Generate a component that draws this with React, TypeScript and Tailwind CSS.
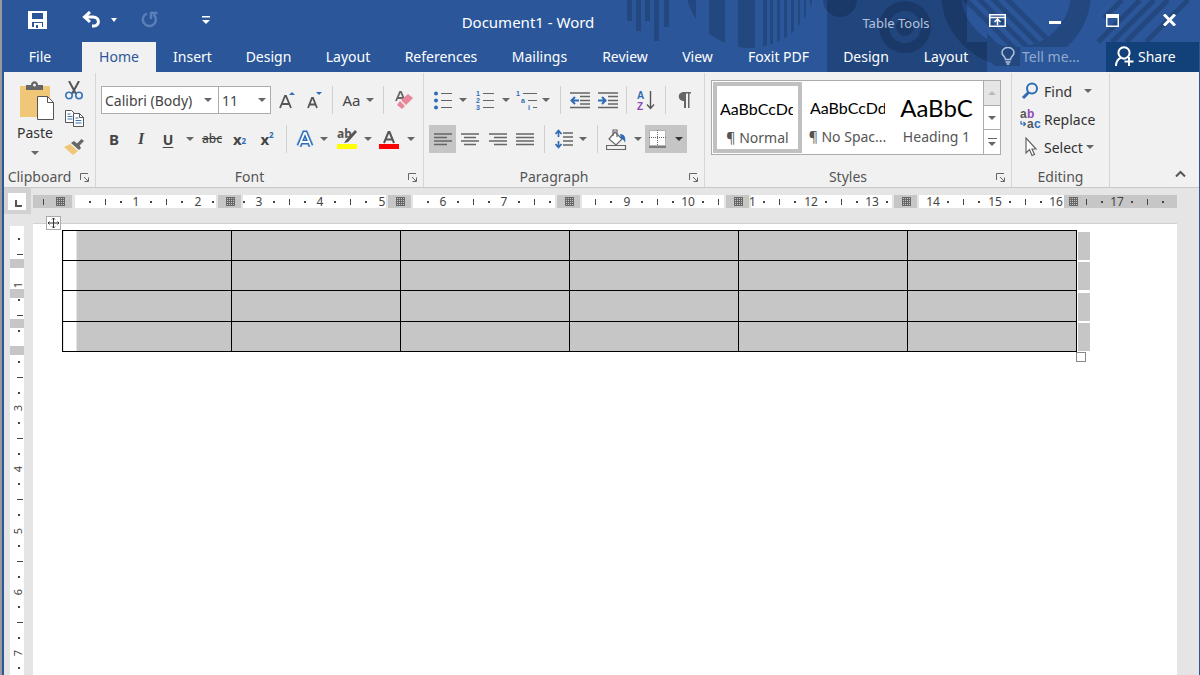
import type { ReactNode } from 'react';
import clsx from 'clsx';

const tabs = [
  { name: 'File', className: 'w-[78px] pr-[6px]' },
  { name: 'Home', className: 'w-[74px] bg-[#f1f1f1] text-[#2b579a]' },
  { name: 'Insert', className: 'w-[73px]' },
  { name: 'Design', className: 'w-[79px]' },
  { name: 'Layout', className: 'w-[80px]' },
  { name: 'References', className: 'w-[106px]' },
  { name: 'Mailings', className: 'w-[91px]' },
  { name: 'Review', className: 'w-[80px]' },
  { name: 'View', className: 'w-[65px]' },
  { name: 'Foxit PDF', className: 'flex-1' },
];

const ROWS = 4;
const COLS = 6;

// Ruler geometry, in pixels
const UNIT = 61.3;
const H_ZERO = 42;
const V_ZERO = -2;
const columnMarks = [185, 355, 524, 693, 861];
const rowMarks = [33, 63, 93, 120];

type ToolProps = {
  label: string;
  className?: string;
  children: ReactNode;
};

const Tool = ({ label, className, children }: ToolProps) => (
  <button
    type="button"
    aria-label={label}
    title={label}
    className={clsx('flex h-7 shrink-0 items-center justify-center text-[#444]', className)}
  >
    {children}
  </button>
);

const Caret = ({ className = 'fill-[#666]' }: { className?: string }) => (
  <svg width="8" height="4" viewBox="0 0 8 4" className={clsx('shrink-0', className)}>
    <path d="M0 0h8L4 4z" />
  </svg>
);

const Drop = ({ label, className }: { label: string; className?: string }) => (
  <Tool label={label} className={className}>
    <Caret />
  </Tool>
);

const Sep = () => <div className="mx-[5px] h-7 w-px shrink-0 bg-[#d0d0d0]" />;

const Launcher = ({ label }: { label: string }) => (
  <button type="button" aria-label={label} className="flex w-5 shrink-0 items-center justify-center pt-[2px]">
    <svg width="10" height="10" viewBox="0 0 10 10" fill="none" stroke="#666">
      <path d="M.5 7V.5H8M4 4l4 4M8.500 4.500v4h-4" />
    </svg>
  </button>
);

type GroupProps = {
  name: string;
  className?: string;
  launcher?: boolean;
  children: ReactNode;
};

const Group = ({ name, className, launcher = true, children }: GroupProps) => (
  <section aria-label={name} className={clsx('flex shrink-0 flex-col border-r border-[#d5d5d5]', className)}>
    <div className="flex-1">{children}</div>
    <div className="flex h-5">
      <span className="flex-1 text-center text-[14px] leading-5 text-[#555]">{name}</span>
      {launcher && <Launcher label={`${name} settings`} />}
    </div>
  </section>
);

// Decorative title bar pattern, with the contextual tab block behind it
const HeaderArt = () => (
  <svg
    width="600"
    height="72"
    viewBox="600 0 600 72"
    className="pointer-events-none absolute top-0 right-[-1px]"
  >
    <defs>
      <clipPath id="disc">
        <circle cx="750" cy="-17" r="65" />
      </clipPath>
      <clipPath id="ringHole">
        <circle cx="1016" cy="-8" r="55" />
      </clipPath>
      <clipPath id="upper">
        <path d="M600 0h420v66h-33V72H600zM1020 0h180v47h-180z" />
      </clipPath>
    </defs>
    <path d="M827 0h140v42h20v30H827z" fill="#21467e" />
    <g fill="#000" opacity="0.17">
      <path d="M627 0h5v21h-5zM636 0h5v31h-5zM645 0h5v21h-5zM654 0h5v41h-5zM664 0h5v27h-5z" />
      <g clipPath="url(#disc)">
        <path d="M686 0h10v50h-10zM709 0h16v50h-16zM738 0h17v50h-17zM763 0h4v50h-4zM770 0h3v50h-3zM777 0h3v50h-3zM784 0h3v50h-3zM791 0h3v50h-3zM798 0h2v50h-2zM804 0h2v50h-2zM810 0h2v50h-2z" />
      </g>
      <circle cx="840" cy="0" r="17" />
      <circle cx="905" cy="27" r="21" fill="none" stroke="#000" strokeWidth="10" />
      <circle cx="905" cy="27" r="9" />
      <g clipPath="url(#upper)">
        <circle cx="1016" cy="-8" r="65" fill="none" stroke="#000" strokeWidth="20" />
      </g>
      <path d="M987 58l8 8h25l-33-33z" />
      <g stroke="#000" strokeWidth="5">
        <path d="M960 -6l70 70M974 -6l60 60M988 -6l60 60M1002 -6l60 60" clipPath="url(#ringHole)" />
        <path d="M1122 0l-18 18M1140 0l-42 42M1154 0l-42 42M1168 0l-42 42M1188 0l-42 42" />
      </g>
    </g>
  </svg>
);

const TitleBar = () => (
  <div className="flex h-[42px] text-white">
    <div className="flex w-[225px] shrink-0 items-center pb-[3px]">
      <button type="button" aria-label="Save" className="ml-6">
        <svg width="19" height="18" viewBox="0 0 19 18" fill="#fff">
          <path d="M0 0h19v18H0zM4 2v6h11V2zM4 11v5h2v-4h8v4h1v-5z" fillRule="evenodd" />
          <path d="M8 14h2v3H8z" fill="#2b579a" />
        </svg>
      </button>
      <button type="button" aria-label="Undo" className="ml-[35px]">
        <svg width="18" height="17" viewBox="0 0 18 17" fill="none" stroke="#fff" strokeWidth="3">
          <path d="M8 1L2.500 6 8 11M3 6h8c7 0 7 9 1 9H10" />
        </svg>
      </button>
      <button type="button" aria-label="Undo history" className="ml-[11px]">
        <svg width="6" height="4" viewBox="0 0 6 4" fill="#fff">
          <path d="M0 0h6L3 4z" />
        </svg>
      </button>
      <button type="button" aria-label="Repeat" className="ml-6">
        <svg width="17" height="17" viewBox="0 0 17 17" fill="none" stroke="#5b80b8" strokeWidth="2.400">
          <path d="M6 2.500A6.500 6.500 0 1 0 12.500 3.500M10 8V2h6.500" />
        </svg>
      </button>
      <button type="button" aria-label="Customize Quick Access Toolbar" className="ml-11">
        <svg width="8" height="8" viewBox="0 0 8 8" fill="#fff">
          <path d="M0 0h8v1.500H0zM0 4h8L4 8z" />
        </svg>
      </button>
    </div>
    <h1 className="flex-1 pt-3 text-center text-[15px] leading-5">Document1 - Word</h1>
    <div className="w-[140px] shrink-0 pt-[13px] pr-[2px] text-center text-[13px] leading-5 text-[#b3c3dc]">
      Table Tools
    </div>
    <div className="flex w-[232px] shrink-0 items-center pb-[2px]">
      <button type="button" aria-label="Ribbon Display Options" className="ml-[22px]">
        <svg width="17" height="13" viewBox="0 0 17 13" fill="none" stroke="#fff" strokeWidth="1.500">
          <path d="M.75.750h15.500v11.500H.75zM1 3.500h15M8.500 11V6M5.500 8l3-3 3 3" />
        </svg>
      </button>
      <button type="button" aria-label="Minimize" className="mt-[4px] ml-[43px]">
        <svg width="12" height="3" viewBox="0 0 12 3" fill="#fff">
          <path d="M0 0h12v3H0z" />
        </svg>
      </button>
      <button type="button" aria-label="Restore" className="ml-[45px]">
        <svg width="13" height="13" viewBox="0 0 13 13" fill="#fff">
          <path d="M0 0h13v13H0zM1.500 4v7.500h10V4z" fillRule="evenodd" />
        </svg>
      </button>
      <button type="button" aria-label="Close" className="ml-[44px]">
        <svg width="13" height="12" viewBox="0 0 13 12" fill="none" stroke="#fff" strokeWidth="3">
          <path d="M1 .5l11 11M12 .5l-11 11" />
        </svg>
      </button>
    </div>
  </div>
);

const TabBar = () => (
  <nav className="flex h-[30px] text-[14px] text-white">
    {tabs.map((tab) => (
      <button key={tab.name} type="button" className={clsx('h-full pb-[2px]', tab.className)}>
        {tab.name}
      </button>
    ))}
    <button type="button" className="w-[78px] shrink-0 pb-[2px]">
      Design
    </button>
    <button type="button" className="w-[82px] shrink-0 pb-[2px]">
      Layout
    </button>
    <label className="flex w-[119px] shrink-0 items-center pb-[2px] pl-[14px]">
      <svg width="14" height="18" viewBox="0 0 14 18" fill="none" stroke="#b3c3dc" strokeWidth="1.500">
        <path d="M4.500 12.500c0-3-3.500-3.500-3.500-7a6 5 0 0 1 12 0c0 3.500-3.500 4-3.500 7zM4.500 15h5M5.500 17h3" />
      </svg>
      <input
        type="text"
        aria-label="Tell me what you want to do"
        placeholder="Tell me..."
        className="ml-[7px] w-20 bg-transparent outline-none placeholder:text-[#93aacd]"
      />
    </label>
    <button type="button" className="flex w-[93px] shrink-0 items-center bg-[#124078] pb-[2px] pl-[9px]">
      <svg width="19" height="21" viewBox="0 0 19 21" fill="none" stroke="#fff" strokeWidth="2">
        <path d="M1 20c0-4 2-7 5-8.500A5.600 5.600 0 1 1 12 11.500M6 11.500c2 1.500 4 1.500 6 0M14 11v9M9.500 15.500h9" />
      </svg>
      <span className="ml-[4px]">Share</span>
    </button>
  </nav>
);

const ClipboardGroup = () => (
  <Group name="Clipboard" className="w-[92px]">
    <div className="flex">
      <button type="button" className="ml-[11px] flex w-10 flex-col items-center self-start text-[14px] text-[#333]">
        <svg width="36" height="40" viewBox="0 0 36 40" className="mt-2 self-end">
          <path d="M1 5h30v31H1z" fill="#f0c677" />
          <path d="M7 9V4h5c0-5 7-5 7 0h5v5z" fill="#666" />
          <circle cx="15.500" cy="4" r="1.500" fill="#f1f1f1" />
          <path d="M18.500 15.500h10l6 6v17h-16z" fill="#fff" stroke="#555" />
          <path d="M28.500 15.500v6h6" fill="none" stroke="#555" />
        </svg>
        <span className="leading-[24px]">Paste</span>
        <Caret className="mt-[6px] fill-[#666]" />
      </button>
      <div className="ml-[9px] flex flex-col items-center pt-[3px]">
        <Tool label="Cut">
          <svg width="18" height="19" viewBox="0 0 18 19" fill="none" strokeWidth="2">
            <path d="M4 0l7 13M14 0L7 13" stroke="#555" />
            <circle cx="4" cy="14.500" r="3.200" stroke="#3b73b9" strokeWidth="1.600" />
            <circle cx="14" cy="14.500" r="3.200" stroke="#3b73b9" strokeWidth="1.600" />
          </svg>
        </Tool>
        <Tool label="Copy">
          <svg width="19" height="17" viewBox="0 0 19 17" fill="#fff" stroke="#555">
            <path d="M.5.500h6l3 3v9h-9z" />
            <path d="M2.500 4h3M2.500 6.500h5M2.500 9h5" stroke="#3b73b9" />
            <path d="M8.500 3.500h6l4 4v9h-10z" />
            <path d="M14.500 3.500v4h4" fill="none" />
            <path d="M10.500 8h3M10.500 10.500h6M10.500 13h6" stroke="#3b73b9" />
          </svg>
        </Tool>
        <Tool label="Format Painter">
          <svg width="20" height="17" viewBox="0 0 20 17">
            <path d="M0 9l6-3 8 7-5 4z" fill="#f0c677" />
            <path d="M7 5l3-2 3 2.500L17.500 1 20 3l-4.500 4.500L17 10l-2 2z" fill="#666" />
          </svg>
        </Tool>
      </div>
    </div>
  </Group>
);

const FontGroup = () => (
  <Group name="Font" className="w-[328px]">
    <div className="flex items-center pt-[13px] pl-[5px]">
      <div className="relative">
        <select
          aria-label="Font"
          className="h-7 w-[118px] appearance-none border border-[#ababab] bg-white pl-[3px] text-[14px] text-[#444] outline-none"
        >
          <option>Calibri (Body)</option>
        </select>
        <Caret className="pointer-events-none absolute top-3 right-[7px] fill-[#666]" />
      </div>
      <div className="relative">
        <select
          aria-label="Font Size"
          className="h-7 w-[52px] appearance-none border border-l-0 border-[#ababab] bg-white pl-[3px] text-[14px] text-[#444] outline-none"
        >
          <option>11</option>
        </select>
        <Caret className="pointer-events-none absolute top-3 right-[5px] fill-[#666]" />
      </div>
      <Tool label="Increase Font Size" className="w-8">
        <svg width="17" height="18" viewBox="0 0 17 18">
          <path d="M1 17L6 5h1l5 12M3 13h7" fill="none" stroke="#555" strokeWidth="1.800" />
          <path d="M10 4l3-3 3 3z" fill="#2f6cb5" />
        </svg>
      </Tool>
      <Tool label="Decrease Font Size" className="w-6">
        <svg width="16" height="18" viewBox="0 0 16 18">
          <path d="M1 17l4-10h1l4 10M2.500 13.500h6" fill="none" stroke="#555" strokeWidth="1.800" />
          <path d="M9 1h6l-3 3z" fill="#2f6cb5" />
        </svg>
      </Tool>
      <Sep />
      <Tool label="Change Case" className="w-10 gap-[5px] text-[15px]">
        Aa
        <Caret />
      </Tool>
      <Sep />
      <Tool label="Clear All Formatting" className="w-[30px]">
        <svg width="18" height="20" viewBox="0 0 18 20">
          <path d="M1 11L5 2h1l4 9M2.500 8h6" fill="none" stroke="#666" strokeWidth="1.800" />
          <path d="M13 4l5 4-7 7-5-5zM5 11l5 5-3 3-5-4z" fill="#e8879c" />
        </svg>
      </Tool>
    </div>
    <div className="flex items-center pt-[11px] pl-[5px]">
      <Tool label="Bold" className="w-[26px] text-[15px] font-bold">
        B
      </Tool>
      <Tool label="Italic" className="w-7 font-['Liberation_Serif',serif] text-[16px] font-bold italic">
        I
      </Tool>
      <Tool label="Underline" className="w-[26px] text-[14px] font-bold underline underline-offset-2">
        U
      </Tool>
      <Drop label="Underline style" className="w-[17px]" />
      <Tool label="Strikethrough" className="w-7 text-[12px] font-medium line-through">
        abc
      </Tool>
      <Tool label="Subscript" className="w-[27px] text-[15px] font-bold">
        x<sub className="text-[8px] text-[#2f6cb5]">2</sub>
      </Tool>
      <Tool label="Superscript" className="w-7 text-[15px] font-bold">
        x<sup className="text-[8px] text-[#2f6cb5]">2</sup>
      </Tool>
      <Sep />
      <Tool label="Text Effects" className="w-[26px]">
        <svg width="18" height="18" viewBox="0 0 18 18" fill="none">
          <path d="M3 16L8.500 3h1L15 16M5.500 12h7" stroke="#a9c6e8" strokeWidth="6" />
          <path d="M3 16L8.500 3h1L15 16M5.500 12h7" stroke="#2f6cb5" strokeWidth="4.500" />
          <path d="M3 16L8.500 3h1L15 16M5.500 12h7" stroke="#fff" strokeWidth="1.800" />
        </svg>
      </Tool>
      <Drop label="Text effects menu" className="w-3" />
      <Tool label="Text Highlight Color" className="w-[33px]">
        <svg width="20" height="22" viewBox="0 0 20 22" overflow="visible">
          <text x="0" y="10" fontSize="12" fontWeight="bold" fill="#555">
            ab
          </text>
          <path d="M18 2l2 2-9 10-4 1 2-3z" fill="#555" />
          <path d="M0 16h20v5H0z" fill="#ff0" />
        </svg>
      </Tool>
      <Drop label="Highlight colors" className="w-[9px]" />
      <Tool label="Font Color" className="w-[34px]">
        <svg width="20" height="20" viewBox="0 0 20 20">
          <path d="M5 14L9.500 3h1L15 14M6.500 10.500h7" fill="none" stroke="#555" strokeWidth="2" />
          <path d="M0 15h20v5H0z" fill="red" />
        </svg>
      </Tool>
      <Drop label="Font colors" className="w-[9px]" />
    </div>
  </Group>
);

const alignments = [
  { label: 'Align Left', className: 'w-[27px] bg-[#c5c5c5]', d: 'M0 1h18M0 4.500h13M0 8h18M0 11.500h13' },
  { label: 'Center', className: 'w-7', d: 'M0 1h18M3 4.500h12M0 8h18M3 11.500h12' },
  { label: 'Align Right', className: 'w-[27px]', d: 'M0 1h18M5 4.500h13M0 8h18M5 11.500h13' },
  { label: 'Justify', className: 'w-7', d: 'M0 1h18M0 4.500h18M0 8h18M0 11.500h18' },
];

const ParagraphGroup = () => (
  <Group name="Paragraph" className="w-[281px]">
    <div className="flex items-center pt-[13px] pl-[5px]">
      <Tool label="Bullets" className="w-7">
        <svg width="18" height="19" viewBox="0 0 18 19">
          <path d="M7 2.500h11M7 9.500h11M7 16.500h11" stroke="#666" strokeWidth="1.200" />
          <g fill="#2f6cb5">
            <circle cx="2" cy="2.500" r="2" />
            <circle cx="2" cy="9.500" r="2" />
            <circle cx="2" cy="16.500" r="2" />
          </g>
        </svg>
      </Tool>
      <Drop label="Bullet library" className="w-3" />
      <Tool label="Numbering" className="w-8">
        <svg width="18" height="21" viewBox="0 0 18 21" overflow="visible">
          <path d="M7 3.500h11M7 10.500h11M7 17.500h11" stroke="#666" strokeWidth="1.200" />
          <g fill="#2f6cb5" className="font-['Liberation_Sans',sans-serif] text-[7px] font-bold">
            <text x="0" y="6">1</text>
            <text x="0" y="13">2</text>
            <text x="0" y="20">3</text>
          </g>
        </svg>
      </Tool>
      <Drop label="Numbering library" className="w-[10px]" />
      <Tool label="Multilevel List" className="w-[30px]">
        <svg width="21" height="21" viewBox="0 0 21 21" overflow="visible">
          <path d="M7 3.500h14M12 10.500h9M17 17.500h4" stroke="#666" strokeWidth="1.200" />
          <g fill="#2f6cb5" className="font-['Liberation_Sans',sans-serif] text-[7px] font-bold">
            <text x="0" y="6">1</text>
            <text x="5" y="13">a</text>
            <text x="12" y="20">i</text>
          </g>
        </svg>
      </Tool>
      <Drop label="List library" className="mr-[5px] w-[9px]" />
      <Sep />
      <Tool label="Decrease Indent" className="w-7">
        <svg width="20" height="17" viewBox="0 0 20 17" fill="none">
          <path d="M0 1h20M10 4.500h10M10 8.500h10M10 12h10M0 15.500h20" stroke="#666" strokeWidth="1.300" />
          <path d="M9 8.500H2M5 5L1.500 8.500 5 12" stroke="#2f6cb5" strokeWidth="2" />
        </svg>
      </Tool>
      <Tool label="Increase Indent" className="w-[27px]">
        <svg width="20" height="17" viewBox="0 0 20 17" fill="none">
          <path d="M0 1h20M10 4.500h10M10 8.500h10M10 12h10M0 15.500h20" stroke="#666" strokeWidth="1.300" />
          <path d="M0 8.500h7M4 5l3.500 3.500L4 12" stroke="#2f6cb5" strokeWidth="2" />
        </svg>
      </Tool>
      <Sep />
      <Tool label="Sort" className="w-7">
        <svg width="18" height="21" viewBox="0 0 18 21" overflow="visible">
          <g className="font-['Liberation_Sans',sans-serif] text-[10px] font-bold">
            <text x="0" y="9" fill="#2f6cb5">A</text>
            <text x="0" y="20" fill="#8e4ab5">Z</text>
          </g>
          <path d="M13.500 1v17M10 14.500l3.500 4 3.500-4" fill="none" stroke="#555" strokeWidth="1.400" />
        </svg>
      </Tool>
      <Sep />
      <Tool label="Show/Hide" className="w-7">
        <svg width="14" height="16" viewBox="0 0 14 16" fill="#666">
          <path d="M6 9C-1 9-1 0 6 0h7v1.500h-1.500V16H10V1.500H8V16H6z" />
        </svg>
      </Tool>
    </div>
    <div className="flex items-center pt-[11px] pl-[5px]">
      {alignments.map((item) => (
        <Tool key={item.label} label={item.label} className={item.className}>
          <svg width="18" height="13" viewBox="0 0 18 13" stroke="#666" strokeWidth="1.300">
            <path d={item.d} />
          </svg>
        </Tool>
      ))}
      <Sep />
      <Tool label="Line Spacing" className="w-7">
        <svg width="18" height="20" viewBox="0 0 18 20" fill="none">
          <path d="M8 4h10M8 8h10M8 12h10M8 16h10" stroke="#666" strokeWidth="1.300" />
          <path d="M3.500 2v6M.5 5l3-3.500 3 3.500M3.500 12v6M.5 15l3 3.500 3-3.500" stroke="#2f6cb5" strokeWidth="1.700" />
        </svg>
      </Tool>
      <Drop label="Line spacing options" className="mr-[5px] w-[9px]" />
      <Sep />
      <Tool label="Shading" className="w-[27px]">
        <svg width="21" height="21" viewBox="0 0 21 21" fill="none" stroke="#666" strokeWidth="1.200">
          <path d="M.5 16.500h19v4H.5z" />
          <path d="M9 3l7 7-6 6-7-6z" fill="#fff" />
          <path d="M7 7V1h4v7" />
          <path d="M14 5c5 0 6 4 5 9-1-3-2-4-4-4z" fill="#2f6cb5" stroke="none" />
        </svg>
      </Tool>
      <Drop label="Shading colors" className="w-[15px]" />
      <Tool label="Borders" className="w-[42px] gap-[9px] bg-[#c5c5c5]">
        <svg width="17" height="18" viewBox="0 0 17 18" stroke="#666">
          <path d="M0 0h17v16H0z" fill="#fff" stroke="none" />
          <path d="M.5.500h16v15H.5zM8.500 0v16M0 7.500h17" fill="none" strokeDasharray="1 1" />
          <path d="M0 17h17" strokeWidth="1.500" />
        </svg>
        <Caret className="fill-[#333]" />
      </Tool>
    </div>
  </Group>
);

const StylesGroup = () => (
  <Group name="Styles" className="w-[307px]">
    <div className="mt-[7px] mr-[10px] ml-[6px] flex h-[75px] border border-[#ababab] bg-white text-[14px] text-[#555]">
      <button type="button" className="m-px w-[89px] border-4 border-[#c0c0c0] pt-[9px]">
        <span className="mr-[5px] ml-[3px] block overflow-hidden text-left font-[Lato] text-[16px] leading-6 whitespace-nowrap text-black">
          AaBbCcDd
        </span>
        <span className="mt-[7px] block leading-5">¶ Normal</span>
      </button>
      <button type="button" className="w-[89px] pt-2">
        <span className="mx-[7px] block overflow-hidden text-left font-[Lato] text-[16px] leading-6 whitespace-nowrap text-black">
          AaBbCcDd
        </span>
        <span className="mt-[7px] block leading-5">¶ No Spac...</span>
      </button>
      <button type="button" className="flex-1 pt-2 pr-[2px]">
        <span className="block text-center font-[Lato] text-[24px] leading-6 whitespace-nowrap text-black">AaBbC</span>
        <span className="mt-[7px] block leading-5">Heading 1</span>
      </button>
      <div className="flex w-[17px] flex-col border-l border-[#ababab]">
        <button
          type="button"
          aria-label="Previous styles"
          className="flex flex-1 items-center justify-center bg-[#e5e5e5]"
        >
          <Caret className="rotate-180 fill-[#bbb]" />
        </button>
        <button
          type="button"
          aria-label="Next styles"
          className="flex flex-1 items-center justify-center border-y border-[#ababab]"
        >
          <Caret />
        </button>
        <button type="button" aria-label="More styles" className="flex flex-1 flex-col items-center justify-center gap-[3px]">
          <span className="h-px w-[9px] bg-[#666]" />
          <Caret />
        </button>
      </div>
    </div>
  </Group>
);

const EditingGroup = () => (
  <Group name="Editing" launcher={false} className="w-[98px]">
    <div className="flex flex-col items-start pt-[4px] pl-2 text-[14px] text-[#333]">
      <button type="button" className="flex h-7 items-center">
        <svg width="24" height="18" viewBox="0 0 24 18" fill="none" stroke="#2f6cb5">
          <circle cx="12" cy="6.500" r="5" strokeWidth="2" />
          <path d="M8.500 10.500L3 16" strokeWidth="3" />
        </svg>
        Find
        <span className="ml-3">
          <Caret />
        </span>
      </button>
      <button type="button" className="flex h-7 items-center">
        <svg
          width="24"
          height="20"
          viewBox="0 0 24 20"
          overflow="visible"
          className="font-['Liberation_Sans',sans-serif] text-[12px] font-bold"
        >
          <text x="0" y="9" fill="#555">a</text>
          <text x="7" y="9" fill="#8e4ab5">b</text>
          <text x="7" y="19" fill="#555">a</text>
          <text x="14" y="19" fill="#2f6cb5">c</text>
          <path d="M1 12v3h4M3.500 13l2 2-2 2" fill="none" stroke="#2f6cb5" strokeWidth="1.200" />
        </svg>
        Replace
      </button>
      <button type="button" className="flex h-7 items-center">
        <svg width="24" height="20" viewBox="0 0 24 20" fill="#fff" stroke="#666" strokeWidth="1.200">
          <path d="M6 1v15l3.500-3.500L12 18.500l2.500-1-2.500-5.500h4z" />
        </svg>
        Select
        <span className="ml-[3px]">
          <Caret />
        </span>
      </button>
    </div>
  </Group>
);

const GridMark = ({ x }: { x: number }) => (
  <path
    d={`M${x - 4} 2.500h9M${x - 4} 4.500h9M${x - 4} 6.500h9M${x - 4} 8.500h9M${x - 4} 10.500h9M${x - 3.5} 2v9M${x - 1.5} 2v9M${x + 0.5} 2v9M${x + 2.5} 2v9M${x + 4.5} 2v9`}
    stroke="#666"
  />
);

const HorizontalRuler = () => (
  <svg width="1144" height="13" viewBox="0 0 1144 13" overflow="visible" aria-label="Horizontal ruler">
    <path d="M0 0h1144v13H0z" fill="#fff" />
    <path d="M0 0h39v13H0zM1031 0h113v13h-113z" fill="#c6c6c6" />
    <path d="M10.500 4v6" stroke="#444" />
    {Array.from({ length: 18 }, (_, n) => {
      const x = Math.round(H_ZERO + n * UNIT);
      return (
        <g key={n} fill="#444">
          {n > 0 && n !== 8 && n !== 11 && (
            <text x={x} y="11" fontSize="12" textAnchor="middle">
              {n}
            </text>
          )}
          <path d={`M${x + 14} 6h2v2h-2zM${x + 30} 4h1v6h-1z`} />
          {n < 17 && <path d={`M${x + 45} 6h2v2h-2z`} />}
        </g>
      );
    })}
    <path d="M1129 6h2v2h-2z" fill="#444" />
    {columnMarks.map((x) => (
      <g key={x}>
        <path d={`M${x - 2} 0h27v13h-27z`} fill="#e5e5e5" />
        <path d={`M${x} 0h23v13h-23z`} fill="#c6c6c6" />
        <GridMark x={x + 12} />
      </g>
    ))}
    <text x="716" y="11" fontSize="12" fill="#444">
      1
    </text>
    <path d="M39 0h3v13h-3z" fill="#e5e5e5" />
    <path d="M1031 0h15v13h-15z" fill="#c6c6c6" />
    <GridMark x={27} />
    <GridMark x={1040} />
  </svg>
);

const VerticalRuler = () => (
  <svg width="14" height="449" viewBox="0 0 14 449" aria-label="Vertical ruler">
    <path d="M0 0h14v449H0z" fill="#fff" />
    {rowMarks.map((y) => (
      <path key={y} d={`M0 ${y}h14v9H0z`} fill="#c6c6c6" />
    ))}
    {Array.from({ length: 8 }, (_, n) => {
      const y = Math.round(V_ZERO + n * UNIT);
      return (
        <g key={n} fill="#444">
          {n > 0 && n !== 2 && (
            <text transform={`translate(12 ${y}) rotate(-90)`} fontSize="11" textAnchor="middle">
              {n}
            </text>
          )}
          <path d={`M8 ${y + 14}h2v2h-2zM7 ${y + 30}h6v1h-6z`} />
          {n > 0 && <path d={`M8 ${y + 45}h2v2h-2z`} />}
        </g>
      );
    })}
  </svg>
);

const DocumentTable = () => (
  <div className="relative mt-[6px] mr-[87px] ml-[29px]">
    <table className="w-full table-fixed border-collapse">
      <tbody>
        {Array.from({ length: ROWS }, (_, row) => (
          <tr key={row} className={row === 2 ? 'h-[31px]' : 'h-[30px]'}>
            {Array.from({ length: COLS }, (_, col) => (
              <td
                key={col}
                className={clsx(
                  'border border-black',
                  col === 0 ? 'bg-linear-to-r from-white from-[13px] to-[#c6c6c6] to-[13px]' : 'bg-[#c6c6c6]',
                )}
              />
            ))}
            <td className="w-[14px] p-0">
              <div className="mt-px ml-px h-7 bg-[#c6c6c6]" />
            </td>
          </tr>
        ))}
      </tbody>
    </table>
    <button
      type="button"
      aria-label="Move table"
      className="absolute -top-[14px] -left-[16px] border border-[#aaa] bg-white"
    >
      <svg width="13" height="12" viewBox="0 0 13 12" stroke="#333" fill="none">
        <path d="M6.500 1v10M1 6h11M5 2.500l1.500-1.500L8 2.500M5 9.500L6.500 11 8 9.500M2.500 4.500L1 6l1.500 1.500M10.500 4.500L12 6l-1.500 1.500" />
      </svg>
    </button>
    <span className="absolute right-[4px] -bottom-[10px] size-[10px] border border-[#888] bg-white" />
  </div>
);

const App = () => (
  <div className="flex h-screen overflow-hidden border-l-2 border-[#9a9a9a] font-['Noto_Sans',sans-serif]">
    <div className="flex min-w-0 flex-1 flex-col border-r border-l-2 border-[#2b579a] bg-[#e5e5e5]">
      <header className="relative shrink-0 bg-[#2b579a]">
        <HeaderArt />
        <div className="relative">
          <TitleBar />
          <TabBar />
        </div>
      </header>

      <div className="flex h-[116px] shrink-0 border-b border-[#c8c8c8] bg-[#f1f1f1] pt-px pb-[10px]">
        <div className="flex h-[114px]">
          <ClipboardGroup />
          <FontGroup />
          <ParagraphGroup />
          <StylesGroup />
          <EditingGroup />
        </div>
        <button type="button" aria-label="Collapse the Ribbon" className="mr-[13px] ml-auto self-end pb-[-4px]">
          <svg width="11" height="8" viewBox="0 0 11 8" fill="none" stroke="#555" strokeWidth="2">
            <path d="M1 7.500L5.500 3 10 7.500" />
          </svg>
        </button>
      </div>

      <div className="flex min-h-0 flex-1">
        <div className="flex w-[29px] shrink-0 flex-col">
          <button type="button" aria-label="Tab stop" className="h-[26px] w-[27px] bg-[#d2d2d2] pl-[4px]">
            <svg width="18" height="17" viewBox="0 0 18 17">
              <path d="M0 0h18v17H0z" fill="#fff" />
              <path d="M8 7v6h6" fill="none" stroke="#555" strokeWidth="2" />
            </svg>
          </button>
          <div className="mt-3 ml-[6px] min-h-0 overflow-hidden">
            <VerticalRuler />
          </div>
        </div>
        <div className="mr-[22px] flex min-w-0 flex-1 flex-col">
          <div className="h-9 shrink-0 overflow-hidden border-b border-[#d0d0d0] pt-[7px]">
            <HorizontalRuler />
          </div>
          <main className="flex-1 bg-white">
            <DocumentTable />
          </main>
        </div>
      </div>
    </div>
  </div>
);

export default App;
